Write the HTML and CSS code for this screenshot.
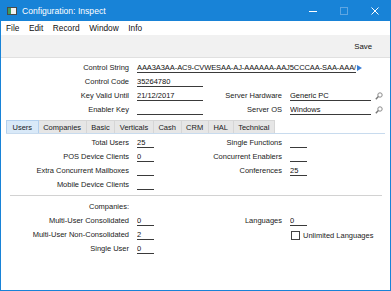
FILE: index.html
```html
<!DOCTYPE html>
<html lang="en">
<head>
  <meta charset="UTF-8">
  <title>Configuration: Inspect</title>
  <link rel="stylesheet" href="styles.css">
</head>
<body>
  <div class="window">
    <!-- Title bar -->
    <div class="titlebar">
      <svg class="app-icon" width="10" height="8" viewBox="0 0 10 8">
        <rect x="0.5" y="0.5" width="9" height="7" fill="#f2f2f2" stroke="#4a4a4a"/>
        <rect x="1" y="1" width="3" height="6" fill="#3f9a5c"/>
      </svg>
      <span class="title">Configuration: Inspect</span>
      <div class="controls">
        <span class="ctl"><svg width="8" height="8" viewBox="0 0 8 8"><line x1="0" y1="4.5" x2="8" y2="4.5" stroke="#fff"/></svg></span>
        <span class="ctl"><svg width="8" height="8" viewBox="0 0 8 8"><rect x="0.5" y="0.5" width="7" height="7" fill="none" stroke="#5fa6e2"/></svg></span>
        <span class="ctl"><svg width="8" height="8" viewBox="0 0 8 8"><path d="M0.5 0.5 L7.5 7.5 M7.5 0.5 L0.5 7.5" stroke="#fff" stroke-width="1"/></svg></span>
      </div>
    </div>

    <!-- Menu -->
    <div class="menubar">
      <span>File</span>
      <span>Edit</span>
      <span>Record</span>
      <span>Window</span>
      <span>Info</span>
    </div>

    <div class="toolbar">
      <span class="save">Save</span>
    </div>

    <!-- Header fields -->
    <div class="grid header">
      <label>Control String</label>
      <div class="wide">
        <span class="fld fld-long">AAA3A3AA-AC9-CVWESAA-AJ-AAAAAA-AAJ5CCCAA-SAA-AAA/</span>
        <svg class="arrow" width="5" height="6" viewBox="0 0 5 6"><path d="M0 0 L5 3 L0 6 Z" fill="#3a7fd6"/></svg>
      </div>

      <label>Control Code</label>
      <span class="fld">35264780</span>
      <span></span><span></span>

      <label>Key Valid Until</label>
      <span class="fld">21/12/2017</span>
      <label>Server Hardware</label>
      <div class="lookup">
        <span class="fld fld-med">Generic PC</span>
        <svg class="mag" width="8" height="8" viewBox="0 0 8 8"><circle cx="5" cy="3" r="2.2" fill="none" stroke="#8a8a8a"/><line x1="3.4" y1="4.6" x2="0.8" y2="7.2" stroke="#777" stroke-width="1.4"/></svg>
      </div>

      <label>Enabler Key</label>
      <span class="fld"></span>
      <label>Server OS</label>
      <div class="lookup">
        <span class="fld fld-med">Windows</span>
        <svg class="mag" width="8" height="8" viewBox="0 0 8 8"><circle cx="5" cy="3" r="2.2" fill="none" stroke="#8a8a8a"/><line x1="3.4" y1="4.6" x2="0.8" y2="7.2" stroke="#777" stroke-width="1.4"/></svg>
      </div>
    </div>

    <!-- Tabs -->
    <div class="tabs">
      <span class="tab active">Users</span>
      <span class="tab">Companies</span>
      <span class="tab">Basic</span>
      <span class="tab">Verticals</span>
      <span class="tab">Cash</span>
      <span class="tab">CRM</span>
      <span class="tab">HAL</span>
      <span class="tab">Technical</span>
    </div>

    <!-- Users tab -->
    <div class="grid narrow users">
      <label>Total Users</label>
      <span class="fld">25</span>
      <label>Single Functions</label>
      <span class="fld"></span>

      <label>POS Device Clients</label>
      <span class="fld">0</span>
      <label>Concurrent Enablers</label>
      <span class="fld"></span>

      <label>Extra Concurrent Mailboxes</label>
      <span class="fld"></span>
      <label>Conferences</label>
      <span class="fld">25</span>

      <label>Mobile Device Clients</label>
      <span class="fld"></span>
      <span></span><span></span>
    </div>

    <div class="separator"></div>

    <div class="grid narrow companies">
      <label>Companies:</label>
      <span></span><span></span><span></span>

      <label>Multi-User Consolidated</label>
      <span class="fld">0</span>
      <label>Languages</label>
      <span class="fld">0</span>

      <label>Multi-User Non-Consolidated</label>
      <span class="fld">2</span>
      <span></span>
      <div class="check"><span class="box"></span>Unlimited Languages</div>

      <label>Single User</label>
      <span class="fld">0</span>
      <span></span><span></span>
    </div>
  </div>
</body>
</html>
```

FILE: styles.css
```css
body {
  margin: 0;
  font-family: "Liberation Sans", Arial, sans-serif;
  background: #ffffff;
  color: #1e1e1e;
}

.window {
  width: 391px;
  height: 291px;
  box-sizing: border-box;
  border: 1px solid #1883d7;
  border-top: 0;
  background: #ffffff;
  overflow: hidden;
}

/* title bar */
.titlebar {
  height: 21px;
  background: #1883d7;
  display: flex;
  align-items: center;
  margin: 0 -1px;
  padding-left: 7px;
}

.app-icon {
  display: block;
}

.title {
  color: #ffffff;
  font-size: 8.6px;
  margin-left: 5px;
}

.controls {
  margin-left: auto;
  display: flex;
  margin-right: 1px;
}

.ctl {
  width: 31px;
  height: 21px;
  display: flex;
  align-items: center;
  justify-content: center;
}

.ctl svg {
  display: block;
}

/* menu */
.menubar {
  height: 14px;
  display: flex;
  align-items: center;
  gap: 9.6px;
  padding-left: 5px;
  font-size: 8.3px;
  color: #111;
}

.toolbar {
  height: 22px;
  background: #f1f1f1;
  border-bottom: 1px solid #e0e0e0;
  display: flex;
  align-items: center;
  justify-content: flex-end;
  padding-right: 18px;
}

.save {
  font-size: 7.8px;
  color: #111;
}

/* form grids */
.grid {
  display: grid;
  grid-template-columns: 136px 66px 87px 1fr;
  grid-auto-rows: 14px;
  font-size: 7.5px;
}

.grid.narrow {
  grid-template-columns: 136px 17px 136px 1fr;
}

.grid label {
  text-align: right;
  padding-right: 8px;
  line-height: 14px;
  white-space: nowrap;
  color: #222;
}

.header {
  padding-top: 3px;
}

.fld {
  display: block;
  height: 9px;
  line-height: 10px;
  margin-top: 2px;
  border-bottom: 1px solid #3a3a3a;
  white-space: nowrap;
  overflow: hidden;
  color: #111;
}

.grid.narrow .fld {
  width: 17px;
}

.wide {
  grid-column: 2 / 5;
  display: flex;
  align-items: flex-start;
}

.fld-long {
  overflow: visible;
  letter-spacing: -0.08px;
}

.arrow {
  margin: 4px 0 0 1px;
}

.lookup {
  display: flex;
  align-items: flex-start;
}

.fld-med {
  width: 81px;
}

.mag {
  margin: 3px 0 0 4px;
}

/* tabs */
.tabs {
  display: flex;
  margin: 3px 5px 0 5px;
  border-bottom: 1px solid #c8dbee;
  font-size: 7.5px;
}

.tab {
  height: 13px;
  line-height: 13px;
  padding: 0 4.6px;
  background: #e6e6e6;
  border: 1px solid #d6d6d6;
  border-left: 0;
  border-bottom: 0;
  box-sizing: border-box;
  color: #1a1a1a;
}

.tab.active {
  background: #d9e9f8;
  border: 1px solid #b3d0ee;
  border-bottom: 0;
  padding: 0 5.5px;
}

.users {
  padding-top: 2px;
}

.separator {
  margin: 3px 8px 0 9px;
  border-top: 1px solid #d2d2d2;
}

.companies {
  padding-top: 4px;
}

.check {
  display: flex;
  align-items: center;
  height: 14px;
  white-space: nowrap;
  margin-left: 1px;
  color: #222;
}

.box {
  width: 7px;
  height: 7px;
  border: 1px solid #444;
  background: #fff;
  margin-right: 3px;
}
```
